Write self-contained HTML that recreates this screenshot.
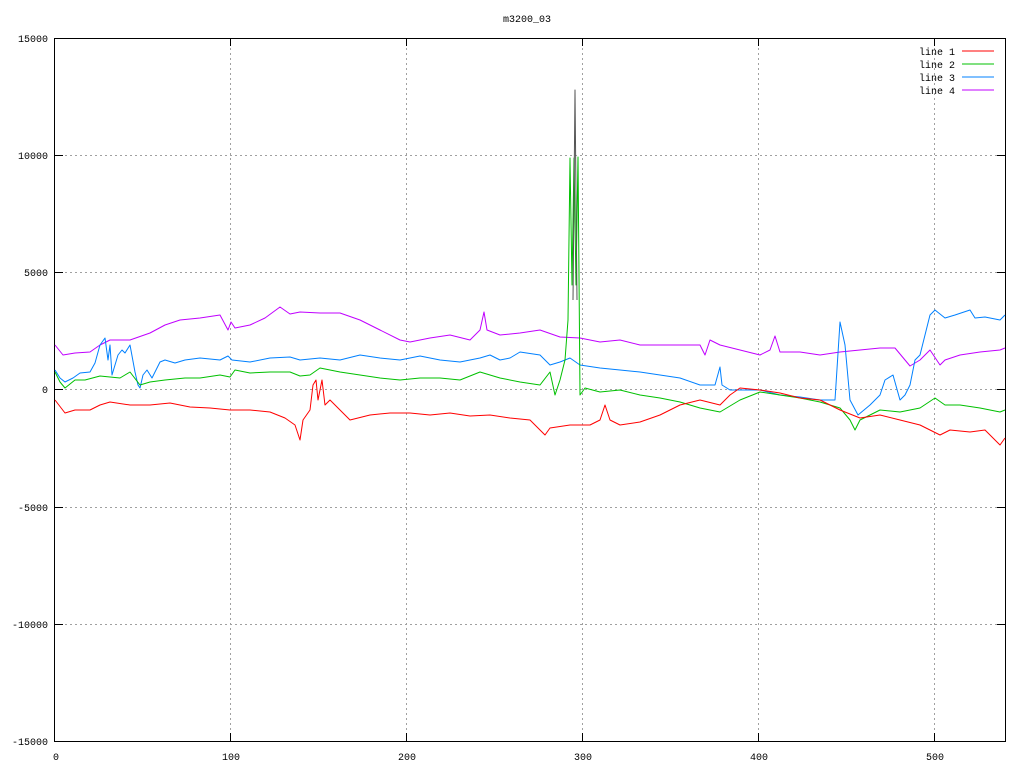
<!DOCTYPE html>
<html><head><style>
html,body{margin:0;padding:0;background:#fff;}
svg{display:block;font-family:"Liberation Mono","DejaVu Sans Mono",monospace;font-size:10px;}
</style></head><body>
<svg width="1024" height="768" viewBox="0 0 1024 768" xmlns="http://www.w3.org/2000/svg">
<rect width="1024" height="768" fill="#fff"/>
<g stroke="#a0a0a0" stroke-dasharray="2,3" stroke-width="1">
<line x1="230.5" y1="38" x2="230.5" y2="741"/>
<line x1="406.5" y1="38" x2="406.5" y2="741"/>
<line x1="582.5" y1="38" x2="582.5" y2="741"/>
<line x1="758.5" y1="38" x2="758.5" y2="741"/>
<line x1="934.5" y1="38" x2="934.5" y2="741"/>
<line x1="55" y1="155.5" x2="1005" y2="155.5"/>
<line x1="55" y1="272.5" x2="1005" y2="272.5"/>
<line x1="55" y1="389.5" x2="1005" y2="389.5"/>
<line x1="55" y1="507.5" x2="1005" y2="507.5"/>
<line x1="55" y1="624.5" x2="1005" y2="624.5"/>
</g>
<g stroke="#000" stroke-width="1">
<rect x="54.5" y="38.5" width="951" height="703" fill="none"/>
<line x1="55" y1="155.5" x2="63" y2="155.5"/><line x1="997" y1="155.5" x2="1005" y2="155.5"/>
<line x1="55" y1="272.5" x2="63" y2="272.5"/><line x1="997" y1="272.5" x2="1005" y2="272.5"/>
<line x1="55" y1="389.5" x2="63" y2="389.5"/><line x1="997" y1="389.5" x2="1005" y2="389.5"/>
<line x1="55" y1="507.5" x2="63" y2="507.5"/><line x1="997" y1="507.5" x2="1005" y2="507.5"/>
<line x1="55" y1="624.5" x2="63" y2="624.5"/><line x1="997" y1="624.5" x2="1005" y2="624.5"/>
<line x1="230.5" y1="38" x2="230.5" y2="46"/><line x1="230.5" y1="733" x2="230.5" y2="741"/>
<line x1="406.5" y1="38" x2="406.5" y2="46"/><line x1="406.5" y1="733" x2="406.5" y2="741"/>
<line x1="582.5" y1="38" x2="582.5" y2="46"/><line x1="582.5" y1="733" x2="582.5" y2="741"/>
<line x1="758.5" y1="38" x2="758.5" y2="46"/><line x1="758.5" y1="733" x2="758.5" y2="741"/>
<line x1="934.5" y1="38" x2="934.5" y2="46"/><line x1="934.5" y1="733" x2="934.5" y2="741"/>
</g>
<g fill="#000" text-anchor="end">
<text x="48" y="42">15000</text>
<text x="48" y="159">10000</text>
<text x="48" y="276">5000</text>
<text x="48" y="393">0</text>
<text x="48" y="511">-5000</text>
<text x="48" y="628">-10000</text>
<text x="48" y="745">-15000</text>
</g>
<g fill="#000" text-anchor="middle">
<text x="56" y="760">0</text>
<text x="231" y="760">100</text>
<text x="407" y="760">200</text>
<text x="583" y="760">300</text>
<text x="759" y="760">400</text>
<text x="935" y="760">500</text>
<text x="527" y="22">m3200_03</text>
</g>
<g fill="#000" text-anchor="end">
<text x="955" y="55">line 1</text>
<text x="955" y="68">line 2</text>
<text x="955" y="81">line 3</text>
<text x="955" y="94">line 4</text>
</g>
<line x1="962" y1="51" x2="994" y2="51" stroke="#ff0000"/>
<line x1="962" y1="64" x2="994" y2="64" stroke="#00c000"/>
<line x1="962" y1="77" x2="994" y2="77" stroke="#0080ff"/>
<line x1="962" y1="90" x2="994" y2="90" stroke="#c000ff"/>
<g fill="none" stroke-width="1" stroke-linejoin="round">
<polyline stroke="#c000ff" points="55,345 63,355 75,353 90,352 100,345 110,340 130,340 150,333 165,325 180,320 200,318 220,315 228,330 231,322 235,328 250,325 265,318 280,307 290,314 300,312 320,313 340,313 360,320 380,330 400,340 410,342 430,338 450,335 470,340 480,330 484,312 487,330 500,335 520,333 540,330 560,337 580,338 600,342 620,340 640,345 660,345 680,345 700,345 705,355 710,340 720,345 740,350 760,355 770,350 775,336 780,352 800,352 820,355 840,352 860,350 880,348 895,348 905,360 910,366 920,360 930,350 940,365 945,360 960,355 980,352 1000,350 1005,348"/>
<polyline stroke="#0080ff" points="55,370 60,378 65,382 73,378 80,373 90,372 95,363 100,345 105,338 108,360 110,345 112,375 118,355 122,350 125,353 130,345 135,372 138,385 140,388 143,375 147,370 152,378 160,362 165,360 175,363 185,360 200,358 220,360 228,356 232,360 250,362 270,358 290,357 300,360 320,358 340,360 360,355 380,358 400,360 420,356 440,360 460,362 480,358 490,355 500,360 510,358 520,352 540,355 550,365 560,362 570,358 580,365 600,368 620,370 640,372 660,375 680,378 700,385 715,385 720,367 722,385 730,390 745,390 760,390 780,395 800,397 820,400 835,400 840,322 845,345 850,400 858,415 870,405 880,395 885,380 893,375 900,400 905,395 910,385 915,360 920,355 930,315 935,310 945,318 955,315 970,310 975,318 985,317 1000,320 1005,315"/>
<polyline stroke="#00c000" points="55,372 60,382 65,388 75,380 85,380 100,376 120,378 130,372 140,385 150,382 165,380 185,378 200,378 220,375 230,377 235,370 250,373 270,372 290,372 300,376 310,375 320,368 340,372 360,375 380,378 400,380 420,378 440,378 460,380 480,372 500,378 520,382 540,385 550,372 555,395 560,380 565,360 568,320 570,158 572,285 574,158 576,285 578,157 580,395 585,388 600,392 620,390 640,395 660,398 680,402 700,408 720,412 740,400 760,392 780,395 800,398 820,402 840,408 850,420 855,430 860,420 870,415 880,410 900,412 920,408 935,398 945,405 960,405 980,408 1000,412 1005,410"/>
<polyline stroke="#555" points="573,300 575,90 577,300"/>
<polyline stroke="#ff0000" points="55,400 65,413 75,410 90,410 100,405 110,402 130,405 150,405 170,403 190,407 210,408 230,410 250,410 270,412 285,418 295,425 300,440 303,420 310,410 313,385 316,380 318,400 322,380 325,405 330,400 340,410 350,420 370,415 390,413 410,413 430,415 450,413 470,416 490,415 510,418 530,420 545,435 550,428 570,425 590,425 600,420 605,405 610,420 620,425 640,422 660,415 680,405 700,400 720,405 730,395 740,388 760,390 780,393 800,398 820,400 840,410 860,418 880,415 900,420 920,425 940,435 950,430 970,432 985,430 995,440 1000,445 1005,438"/>
</g>
</svg>
</body></html>
